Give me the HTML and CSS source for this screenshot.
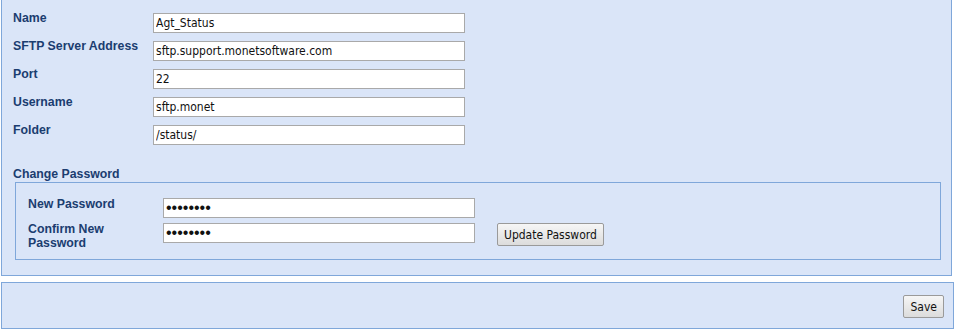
FILE: index.html
```html
<!DOCTYPE html>
<html>
<head>
    <title>SFTP Settings</title>
<link rel="stylesheet" href="styles.css">
</head>
<body>
    <div class="panel panel-main">
        <div class="field-grid">
            <label for="name">Name</label>
            <input type="text" id="name" value="Agt_Status">

            <label for="server">SFTP Server Address</label>
            <input type="text" id="server" value="sftp.support.monetsoftware.com">

            <label for="port">Port</label>
            <input type="text" id="port" value="22">

            <label for="username">Username</label>
            <input type="text" id="username" value="sftp.monet">

            <label for="folder">Folder</label>
            <input type="text" id="folder" value="/status/">
        </div>

        <div class="section-title">Change Password</div>
        <fieldset class="password-box">
            <div class="password-grid">
                <label for="new-password">New Password</label>
                <input type="password" id="new-password" value="12345678">
                <span></span>

                <label for="confirm-password">Confirm New Password</label>
                <input type="password" id="confirm-password" value="12345678">
                <button type="button" class="btn">Update Password</button>
            </div>
        </fieldset>
    </div>

    <div class="panel panel-actions">
        <button type="button" class="btn">Save</button>
    </div>
</body>
</html>
```

FILE: styles.css
```css
/* Global Styles */
body {
    font-family: "Liberation Sans", Arial, sans-serif;
    font-size: 12px;
    background-color: #ffffff;
    margin: 0;
    padding: 0 0 0 1px;
}

.panel {
    box-sizing: border-box;
    background-color: #dae5f8;
    border: 1px solid #7fa7da;
}

.panel-main {
    width: 951px;
    border-top: none;
    padding: 10px 11px 15px 11px;
}

.panel-actions {
    width: 953px;
    margin-top: 6px;
    padding: 12px 9px 10px 11px;
    display: flex;
    justify-content: flex-end;
}

label,
.section-title {
    font-family: "Liberation Sans", Arial, sans-serif;
    font-size: 12.3px;
    color: #1b3d70;
    font-weight: bold;
    line-height: 14px;
}

/* Settings rows */
.field-grid {
    display: grid;
    grid-template-columns: 140px 312px;
    row-gap: 5px;
    align-items: start;
}

.field-grid label {
    padding-top: 1px;
}

input[type="text"],
input[type="password"] {
    box-sizing: border-box;
    height: 20px;
    margin: 3px 0 0 0;
    padding: 0 2px;
    border: 1px solid #a9a9a9;
    background-color: #fff;
    font-family: "DejaVu Sans Condensed", "Liberation Sans", sans-serif;
    font-size: 12px;
    color: #111;
}

input[type="password"] {
    font-family: "Liberation Sans", sans-serif;
    font-size: 16px;
    line-height: 18px;
}

.section-title {
    margin-top: 22px;
}

/* Change password box */
.password-box {
    margin: 1px -1px 0 2px;
    padding: 12px 12px 9px 12px;
    border: 1px solid #7fa7da;
    min-width: 0;
}

.password-grid {
    display: grid;
    grid-template-columns: 135px 312px auto;
    column-gap: 0;
    row-gap: 2px;
    align-items: start;
}

.password-grid label {
    width: 100px;
    padding-top: 2px;
}

.btn {
    font-family: "DejaVu Sans Condensed", "Liberation Sans", sans-serif;
    font-size: 12px;
    color: #111;
    height: 23px;
    padding: 0 6px;
    border: 1px solid #9a9a9a;
    border-radius: 2px;
    background: linear-gradient(#f6f6f6, #dcdcdc);
    cursor: pointer;
}

.password-grid .btn {
    margin: 3px 0 0 22px;
    justify-self: start;
}
```
